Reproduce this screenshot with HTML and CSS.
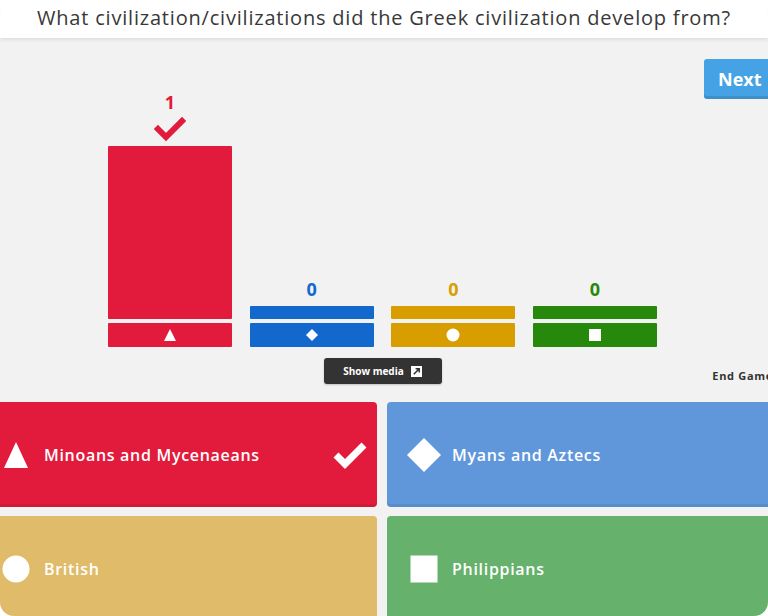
FILE: index.html
```html
<!DOCTYPE html>
<html>
<head>
<meta charset="utf-8">
<link rel="stylesheet" href="styles.css">
</head>
<body>
<div class="app">
  <header class="question">What civilization/civilizations did the Greek civilization develop from?</header>
  <main class="stage">
    <div class="chart">
      <div class="col">
        <div class="count red-t">1</div>
        <svg class="correct" viewBox="0 0 32 26"><path d="M4 13 L12 21 L28 5" fill="none" stroke="#e21b3c" stroke-width="6" stroke-linecap="square"/></svg>
        <div class="bar red" style="height:173px"></div>
        <div class="base red"><svg viewBox="0 0 14 14"><polygon points="7,1 13,13 1,13" fill="#fff"/></svg></div>
      </div>
      <div class="col">
        <div class="count blue-t gap">0</div>
        <div class="bar blue" style="height:13px"></div>
        <div class="base blue"><svg viewBox="0 0 14 14"><polygon points="7,1 13,7 7,13 1,7" fill="#fff"/></svg></div>
      </div>
      <div class="col">
        <div class="count yellow-t gap">0</div>
        <div class="bar yellow" style="height:13px"></div>
        <div class="base yellow"><svg viewBox="0 0 14 14"><circle cx="7" cy="7" r="6.5" fill="#fff"/></svg></div>
      </div>
      <div class="col">
        <div class="count green-t gap">0</div>
        <div class="bar green" style="height:13px"></div>
        <div class="base green"><svg viewBox="0 0 14 14"><rect x="1" y="1" width="12" height="12" fill="#fff"/></svg></div>
      </div>
    </div>
    <button class="next">Next</button>
    <button class="media">Show media <svg viewBox="0 0 12 12"><rect x="0" y="0" width="12" height="12" fill="#fff"/><path d="M3 9 L9 3 M5 3 H9 V7" fill="none" stroke="#333" stroke-width="1.6"/></svg></button>
    <div class="endgame">End Game</div>
  </main>
  <section class="answers">
    <div class="tile t-red">
      <span class="icon"><svg viewBox="0 0 26 28"><polygon points="13,1 25,27 1,27" fill="#fff"/></svg></span>
      <span class="label">Minoans and Mycenaeans</span>
      <svg class="tick" viewBox="0 0 36 30"><path d="M4 15 L13 24 L32 5" fill="none" stroke="#fff" stroke-width="7"/></svg>
    </div>
    <div class="tile t-blue">
      <span class="icon"><svg viewBox="0 0 36 36"><polygon points="18,1 35,18 18,35 1,18" fill="#fff"/></svg></span>
      <span class="label">Myans and Aztecs</span>
    </div>
    <div class="tile t-yellow">
      <span class="icon"><svg viewBox="0 0 28 28"><circle cx="14" cy="14" r="13.5" fill="#fff"/></svg></span>
      <span class="label">British</span>
    </div>
    <div class="tile t-green">
      <span class="icon"><svg viewBox="0 0 28 28"><rect x="0.5" y="0.5" width="27" height="27" fill="#fff"/></svg></span>
      <span class="label">Philippians</span>
    </div>
  </section>
</div>
</body>
</html>
```
FILE: styles.css
```css
* { box-sizing: border-box; }
html, body { margin: 0; padding: 0; background: #fff; }
body { font-family: "Open Sans", "Liberation Sans", sans-serif; }
.app {
  width: 768px;
  height: 616px;
  border-radius: 14px;
  overflow: hidden;
  background: #f2f2f2;
  display: flex;
  flex-direction: column;
}
.question {
  height: 38px;
  flex: none;
  background: #fff;
  color: #383838;
  font-size: 20px;
  letter-spacing: 0.8px;
  line-height: 36px;
  text-align: center;
  white-space: nowrap;
  box-shadow: 0 2px 3px rgba(0,0,0,0.08);
  position: relative;
  z-index: 1;
}
.stage {
  display: grid;
  grid-template-columns: 108px 549px 1fr;
  grid-template-rows: auto auto;
  padding-top: 21px;
  flex: none;
}
.chart {
  grid-column: 2;
  grid-row: 1;
  margin-top: 33px;
  display: grid;
  grid-template-columns: repeat(4, 124px);
  column-gap: 17.66px;
  align-items: end;
}
.col { display: flex; flex-direction: column; align-items: stretch; }
.count {
  text-align: center;
  font-weight: 700;
  font-size: 18px;
  line-height: 20px;
}
.count.gap { margin-bottom: 7px; }
.correct { width: 32px; height: 26px; align-self: center; margin: 4px 0 4px; }
.red-t { color: #e21b3c; }
.blue-t { color: #1368ce; }
.yellow-t { color: #d89e00; }
.green-t { color: #26890c; }
.bar { border-radius: 1px; }
.base {
  height: 24px;
  margin-top: 4px;
  display: flex;
  align-items: center;
  justify-content: center;
  border-radius: 1px;
}
.base svg { width: 14px; height: 14px; }
.red { background: #e21b3c; }
.blue { background: #1368ce; }
.yellow { background: #d89e00; }
.green { background: #26890c; }
.next {
  grid-column: 3;
  grid-row: 1;
  justify-self: end;
  align-self: start;
  margin-right: -12px;
  width: 76px;
  height: 40px;
  border: none;
  border-radius: 3px;
  background: #45a3e5;
  color: #fff;
  font-family: inherit;
  font-weight: 700;
  font-size: 18px;
  text-align: left;
  padding: 0 0 0 14px;
  box-shadow: inset 0 -3px rgba(0,0,0,0.12);
}
.media {
  grid-column: 2;
  grid-row: 2;
  justify-self: center;
  margin-top: 11px;
  height: 26px;
  width: 118px;
  border: none;
  border-radius: 3px;
  background: #333;
  color: #fff;
  font-family: inherit;
  font-weight: 700;
  font-size: 10px;
  display: flex;
  align-items: center;
  justify-content: center;
  gap: 7px;
  box-shadow: 0 1px 2px rgba(0,0,0,0.2);
}
.media svg { width: 11px; height: 11px; }
.endgame {
  grid-column: 3;
  grid-row: 2;
  align-self: end;
  justify-self: end;
  margin-right: -5px;
  margin-bottom: 1px;
  white-space: nowrap;
  font-size: 11px;
  letter-spacing: 0.7px;
  font-weight: 700;
  color: #333;
  line-height: 14px;
}
.answers {
  margin-top: 18px;
  margin-left: -21px;
  display: grid;
  grid-template-columns: 398px 398px;
  grid-template-rows: 105px 105px;
  column-gap: 10px;
  row-gap: 9px;
  flex: none;
}
.tile {
  display: flex;
  align-items: center;
  padding-left: 19px;
  border-radius: 4px;
  color: #fff;
  box-shadow: inset 0 -3px rgba(0,0,0,0.08);
}
.icon {
  width: 36px;
  height: 36px;
  display: flex;
  align-items: center;
  justify-content: center;
  flex: none;
}
.t-red .icon svg { width: 26px; height: 28px; }
.t-blue .icon svg { width: 36px; height: 36px; }
.t-yellow .icon svg, .t-green .icon svg { width: 28px; height: 28px; }
.label {
  margin-left: 10px;
  font-weight: 600;
  font-size: 16px;
  letter-spacing: 0.7px;
  white-space: nowrap;
}
.tick { width: 36px; height: 30px; margin-left: auto; margin-right: 9px; }
.t-red { background: #e21b3c; }
.t-blue { background: #6097db; }
.t-yellow { background: #e0bc6a; }
.t-green { background: #66b16b; }
```
